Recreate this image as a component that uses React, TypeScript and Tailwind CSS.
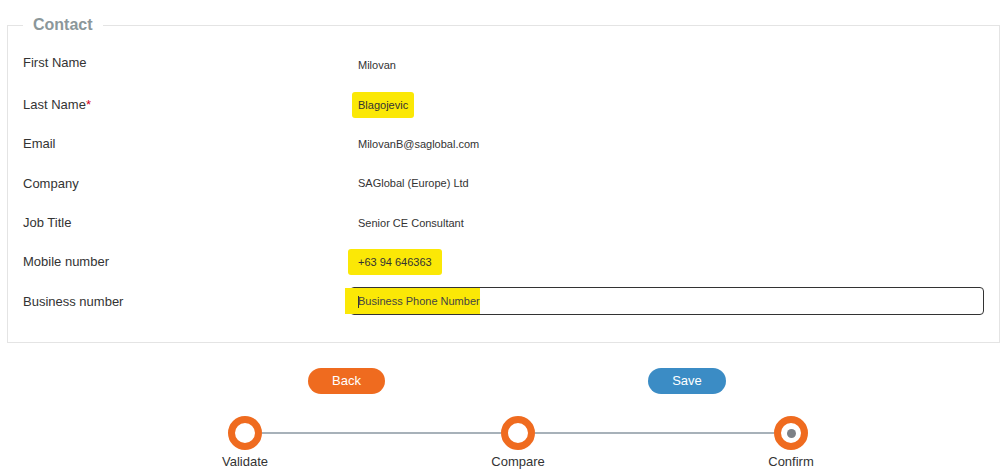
import React from 'react';

const rows: { label: string; value: string; required?: boolean; mark?: string }[] = [
    { label: 'First Name', value: 'Milovan' },
    { label: 'Last Name', value: 'Blagojevic', required: true, mark: 'ml-[2px] px-[6px]' },
    { label: 'Email', value: 'MilovanB@saglobal.com' },
    { label: 'Company', value: 'SAGlobal (Europe) Ltd' },
    { label: 'Job Title', value: 'Senior CE Consultant' },
    { label: 'Mobile number', value: '+63 94 646363', mark: '-ml-[2px] px-[10px]' },
];

const Step: React.FC<{ label: string; active?: boolean }> = ({ label, active }) => (
    <div className="relative w-[34px] h-[34px] shrink-0">
        <div className="w-[34px] h-[34px] rounded-full border-[7px] border-[#ef6b1f] bg-white flex items-center justify-center">
            {active && <div className="w-[9px] h-[9px] rounded-full bg-[#7d8186]" />}
        </div>
        <div className="absolute top-[36px] left-1/2 -translate-x-1/2 whitespace-nowrap text-[13px] text-[#333]">{label}</div>
    </div>
);

export default function App() {
    return (
        <div className="w-[1000px] h-[473px] bg-white overflow-hidden" style={{ fontFamily: '"Liberation Sans", Arial, sans-serif' }}>
            <div className="pl-[7px] pr-[2px] pt-[14px]">
                <fieldset className="border border-[#e4e4e4] px-[15px] h-[329px]">
                    <legend className="px-[10px] text-[16px] font-bold text-[#8b979a] leading-[22px]">Contact</legend>
                    <div className="pt-[10px]">
                        {rows.map((r, i) => (
                            <div key={r.label} className="flex items-center h-[39.3px]">
                                <div className={`w-[327px] text-[13px] text-[#333] ${i === 0 ? '-mt-[6px]' : ''}`}>
                                    {r.label}
                                    {r.required && <span className="text-[#d0021b]">*</span>}
                                </div>
                                <div className="flex-1 text-[11px] text-[#333]">
                                    <span className={r.mark ? `inline-block bg-[#fbe806] py-[5px] rounded-[3px] ${r.mark}` : 'inline-block pl-[8px]'}>
                                        {r.value}
                                    </span>
                                </div>
                            </div>
                        ))}
                        <div className="flex items-center h-[39.3px]">
                            <div className="w-[327px] text-[13px] text-[#333]">Business number</div>
                            <div className="flex-1">
                                <div className="relative h-[28px] w-[634px] border-[1.5px] border-[#333] rounded-[4px] flex items-center">
                                    <span className="absolute -left-[6px] top-0 h-[26px] w-[135px] bg-[#fbe806]" />
                                    <span className="relative pl-[7px] text-[11px] text-[#444]">
                                        <span className="inline-block w-px h-[12px] bg-[#333] align-middle -mr-px" />
                                        Business Phone Number
                                    </span>
                                </div>
                            </div>
                        </div>
                    </div>
                </fieldset>
            </div>

            <div className="flex mt-[25px] h-[26px]">
                <button className="ml-[308px] w-[77px] h-[26px] rounded-full bg-[#ef6b1f] text-white text-[13px]">Back</button>
                <button className="ml-[263px] w-[78px] h-[26px] rounded-full bg-[#3b8cc5] text-white text-[13px]">Save</button>
            </div>

            <div className="flex items-center mt-[22px] ml-[228px]">
                <Step label="Validate" />
                <div className="w-[239px] h-[2px] bg-[#a7b1b9]" />
                <Step label="Compare" />
                <div className="w-[239px] h-[2px] bg-[#a7b1b9]" />
                <Step label="Confirm" active />
            </div>
        </div>
    );
}
